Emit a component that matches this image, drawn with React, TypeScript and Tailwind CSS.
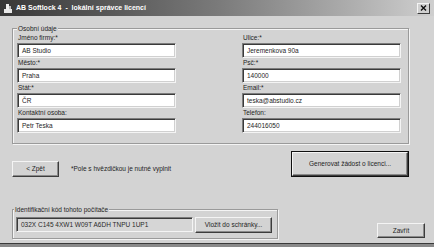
import React from "react";

const font = { fontFamily: '"Liberation Sans", Arial, sans-serif' };

function Field({ label, value }: { label: string; value: string }) {
  return (
    <div className="flex flex-col w-[159px]">
      <div className="h-[10px] leading-[10px] text-[#1e1e1e] pl-[1px]">{label}</div>
      <div className="h-[15px] bg-white border border-t-[#7c7c7c] border-l-[#7c7c7c] border-b-[#f4f4f4] border-r-[#f4f4f4] shadow-[inset_1px_1px_0_#3a3a3a,inset_-1px_-1px_0_#d0d0d0] flex items-center pl-[4px] text-[#1e1e1e]">
        {value}
      </div>
    </div>
  );
}

function Btn({ children, className = "" }: { children: React.ReactNode; className?: string }) {
  return (
    <div
      className={
        "bg-[#d3d3d3] border border-t-[#f4f4f4] border-l-[#f4f4f4] border-b-[#3c3c3c] border-r-[#3c3c3c] shadow-[inset_-1px_-1px_0_#8a8a8a] flex items-center justify-center text-[#1e1e1e] " +
        className
      }
    >
      {children}
    </div>
  );
}

export default function App() {
  return (
    <div className="w-[434px] h-[247px] bg-[#d3d3d3] flex flex-col overflow-hidden text-[6.5px]" style={font}>
      {/* title bar */}
      <div className="h-[16px] bg-gradient-to-r from-[#383838] via-[#7a7a7a] to-[#cfcfcf] flex items-center shrink-0">
        <svg width="10" height="11" viewBox="0 0 10 11" className="ml-[3px]">
          <rect x="1" y="6" width="8" height="4" fill="#e8e8e8" />
          <rect x="3" y="1" width="3" height="6" fill="#f0f0f0" />
          <rect x="6" y="3" width="2" height="3" fill="#bdbdbd" />
        </svg>
        <div className="ml-[3px] text-white font-bold text-[7px] whitespace-pre">AB Softlock 4  -  lokální správce licencí</div>
        <div className="ml-auto mr-[4px] w-[13px] h-[11px] bg-[#d0d0d0] border border-t-[#f4f4f4] border-l-[#f4f4f4] border-b-[#3c3c3c] border-r-[#3c3c3c] flex items-center justify-center">
          <svg width="7" height="6" viewBox="0 0 7 6">
            <path d="M1 0.5 L6 5.5 M6 0.5 L1 5.5" stroke="#111" strokeWidth="1.4" />
          </svg>
        </div>
      </div>

      {/* group 1 */}
      <div className="relative ml-[12px] mt-[12px] w-[397px] h-[116px] border border-[#9a9a9a] shadow-[inset_1px_1px_0_#f4f4f4,1px_1px_0_#f4f4f4] shrink-0">
        <div className="absolute left-[4px] top-[-5px] leading-[9px] bg-[#d3d3d3] px-[1px] text-[#1e1e1e]">Osobní údaje</div>
        <div className="flex justify-between pl-[4px] pr-[7px] pt-[4px]">
          <div className="flex flex-col">
            <Field label="Jméno firmy:*" value="AB Studio" />
            <Field label="Město:*" value="Praha" />
            <Field label="Stát:*" value="ČR" />
            <Field label="Kontaktní osoba:" value="Petr Teska" />
          </div>
          <div className="flex flex-col">
            <Field label="Ulice:*" value="Jeremenkova 90a" />
            <Field label="Psč:*" value="140000" />
            <Field label="Email:*" value="teska@abstudio.cz" />
            <Field label="Telefon:" value="244016050" />
          </div>
        </div>
      </div>

      {/* buttons row */}
      <div className="flex items-end mt-[7px] shrink-0">
        <div className="flex items-center ml-[12px]">
          <Btn className="w-[47px] h-[16px]">&lt; Zpět</Btn>
          <div className="ml-[12px] text-[#1e1e1e]">*Pole s hvězdičkou je nutné vyplnit</div>
        </div>
        <div className="ml-auto mr-[25px] w-[118px] h-[26px] border border-[#101010] flex">
          <Btn className="flex-1">Generovat žádost o licenci...</Btn>
        </div>
      </div>

      {/* bottom row */}
      <div className="flex items-end mt-[32px] shrink-0">
        <div className="relative ml-[12px] w-[266px] h-[30px] border border-[#9a9a9a] shadow-[inset_1px_1px_0_#f4f4f4,1px_1px_0_#f4f4f4] flex items-start pt-[7px] pl-[3px]">
          <div className="absolute left-[1px] top-[-5px] leading-[9px] bg-[#d3d3d3] px-[1px] text-[#1e1e1e]">Identifikační kód tohoto počítače</div>
          <div className="w-[177px] h-[15px] bg-[#d6d6d6] border border-t-[#7c7c7c] border-l-[#7c7c7c] border-b-[#f4f4f4] border-r-[#f4f4f4] shadow-[inset_1px_1px_0_#3a3a3a] flex items-center pl-[4px] text-[#2a2a2a]">
            032X C145 4XW1 W09T A6DH TNPU 1UP1
          </div>
          <Btn className="ml-[2px] w-[77px] h-[16px]">Vložit do schránky...</Btn>
        </div>
        <Btn className="ml-auto mr-[9px] mb-[1px] w-[48px] h-[15px]">Zavřít</Btn>
      </div>

      <div className="mt-auto h-[4px] border-t border-[#3a3a3a] bg-[#8a8a8a] shrink-0" />
    </div>
  );
}
